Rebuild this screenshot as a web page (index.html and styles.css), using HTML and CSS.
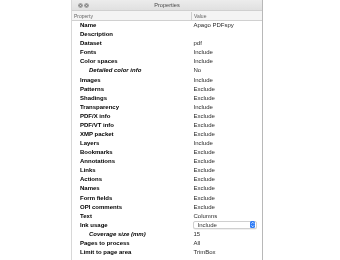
FILE: index.html
```html
<!DOCTYPE html>
<html>
<head>
<meta charset="utf-8">
<link rel="stylesheet" href="styles.css">
</head>
<body>
<div class="win">
  <div class="titlebar">
    <div class="lights">
      <svg class="btn" viewBox="0 0 10 10"><circle cx="5" cy="5" r="4.6" fill="#8a8a8a"/><path d="M3.2 3.2L6.8 6.8M6.8 3.2L3.2 6.8" stroke="#e6e6e6" stroke-width="1.3"/></svg>
      <svg class="btn" viewBox="0 0 10 10"><circle cx="5" cy="5" r="4.6" fill="#8a8a8a"/><path d="M3.2 3.2L6.8 6.8M6.8 3.2L3.2 6.8" stroke="#e6e6e6" stroke-width="1.3"/></svg>
    </div>
    <div class="title">Properties</div>
  </div>
  <div class="header">
    <div class="hcell">Property</div>
    <div class="hcell val">Value</div>
  </div>
  <div class="rows">
    <div class="row"><div class="k">Name</div><div class="v">Apago PDFspy</div></div>
    <div class="row"><div class="k">Description</div><div class="v"></div></div>
    <div class="row"><div class="k">Dataset</div><div class="v">pdf</div></div>
    <div class="row"><div class="k">Fonts</div><div class="v">Include</div></div>
    <div class="row"><div class="k">Color spaces</div><div class="v">Include</div></div>
    <div class="row"><div class="k sub">Detailed color info</div><div class="v">No</div></div>
    <div class="row"><div class="k">Images</div><div class="v">Include</div></div>
    <div class="row"><div class="k">Patterns</div><div class="v">Exclude</div></div>
    <div class="row"><div class="k">Shadings</div><div class="v">Exclude</div></div>
    <div class="row"><div class="k">Transparency</div><div class="v">Include</div></div>
    <div class="row"><div class="k">PDF/X info</div><div class="v">Exclude</div></div>
    <div class="row"><div class="k">PDF/VT info</div><div class="v">Exclude</div></div>
    <div class="row"><div class="k">XMP packet</div><div class="v">Exclude</div></div>
    <div class="row"><div class="k">Layers</div><div class="v">Include</div></div>
    <div class="row"><div class="k">Bookmarks</div><div class="v">Exclude</div></div>
    <div class="row"><div class="k">Annotations</div><div class="v">Exclude</div></div>
    <div class="row"><div class="k">Links</div><div class="v">Exclude</div></div>
    <div class="row"><div class="k">Actions</div><div class="v">Exclude</div></div>
    <div class="row"><div class="k">Names</div><div class="v">Exclude</div></div>
    <div class="row"><div class="k">Form fields</div><div class="v">Exclude</div></div>
    <div class="row"><div class="k">OPI comments</div><div class="v">Exclude</div></div>
    <div class="row"><div class="k">Text</div><div class="v">Columns</div></div>
    <div class="row"><div class="k">Ink usage</div><div class="v"><div class="select"><span class="stext">Include</span><span class="arrow"><svg viewBox="0 0 6 8"><path d="M1.5 3L3 1.5L4.5 3M1.5 5L3 6.5L4.5 5" fill="none" stroke="#fff" stroke-width="0.9"/></svg></span></div></div></div>
    <div class="row"><div class="k sub">Coverage size (mm)</div><div class="v">15</div></div>
    <div class="row"><div class="k">Pages to process</div><div class="v">All</div></div>
    <div class="row"><div class="k">Limit to page area</div><div class="v">TrimBox</div></div>
  </div>
</div>
</body>
</html>
```
FILE: styles.css
```css
html, body {
  margin: 0;
  padding: 0;
  background: #ffffff;
}
body {
  font-family: "Liberation Sans", Arial, sans-serif;
  font-size: 6px;
  width: 340px;
  height: 260px;
  overflow: hidden;
  -webkit-font-smoothing: antialiased;
}
.win {
  margin-left: 71px;
  width: 190px;
  border-left: 1px solid #d8d8d8;
  border-right: 1px solid #b8b8b8;
  background: #fff;
  height: 260px;
  will-change: transform;
}
.titlebar {
  height: 10px;
  background: linear-gradient(#ececec, #e0e0e0);
  display: flex;
  align-items: center;
  position: relative;
}
.lights {
  display: flex;
  gap: 1.5px;
  padding-left: 5.5px;
}
.btn {
  width: 5px;
  height: 5px;
  display: block;
}
.title {
  position: absolute;
  left: 0;
  right: 0;
  text-align: center;
  color: #4a4a4a;
  font-size: 5.6px;
  line-height: 10px;
}
.header {
  display: grid;
  grid-template-columns: 119px 1fr;
  background: #f4f4f4;
  border-top: 0.5px solid #d0d0d0;
  border-bottom: 0.5px solid #d0d0d0;
  box-sizing: border-box;
  height: 10.5px;
}
.hcell {
  font-size: 5px;
  color: #666;
  line-height: 10px;
  padding-left: 2px;
}
.hcell.val {
  border-left: 0.5px solid #cfcfcf;
  padding-left: 2px;
  margin: 1px 0;
  line-height: 8px;
}
.rows {
  display: flex;
  flex-direction: column;
}
.row {
  display: grid;
  grid-template-columns: 119px 1fr;
  height: 9.08px;
  align-items: center;
}
.k {
  font-weight: bold;
  color: #000;
  padding-left: 8px;
  white-space: nowrap;
}
.k.sub {
  font-style: italic;
  padding-left: 17px;
}
.v {
  color: #2a2a2a;
  padding-left: 2.5px;
  white-space: nowrap;
}
.select {
  display: flex;
  align-items: center;
  justify-content: space-between;
  width: 64px;
  height: 8.5px;
  margin-left: -1px;
  box-sizing: border-box;
  border: 0.5px solid #d0d0d0;
  border-radius: 2px;
  background: #fff;
  box-shadow: 0 0.5px 0.5px rgba(0,0,0,0.12);
}
.stext {
  padding-left: 4px;
  color: #333;
}
.arrow {
  width: 5.5px;
  height: 7px;
  margin-right: 0.5px;
  border-radius: 1.5px;
  background: #2f7cf6;
  display: flex;
}
.arrow svg {
  width: 5.5px;
  height: 7px;
}
```
